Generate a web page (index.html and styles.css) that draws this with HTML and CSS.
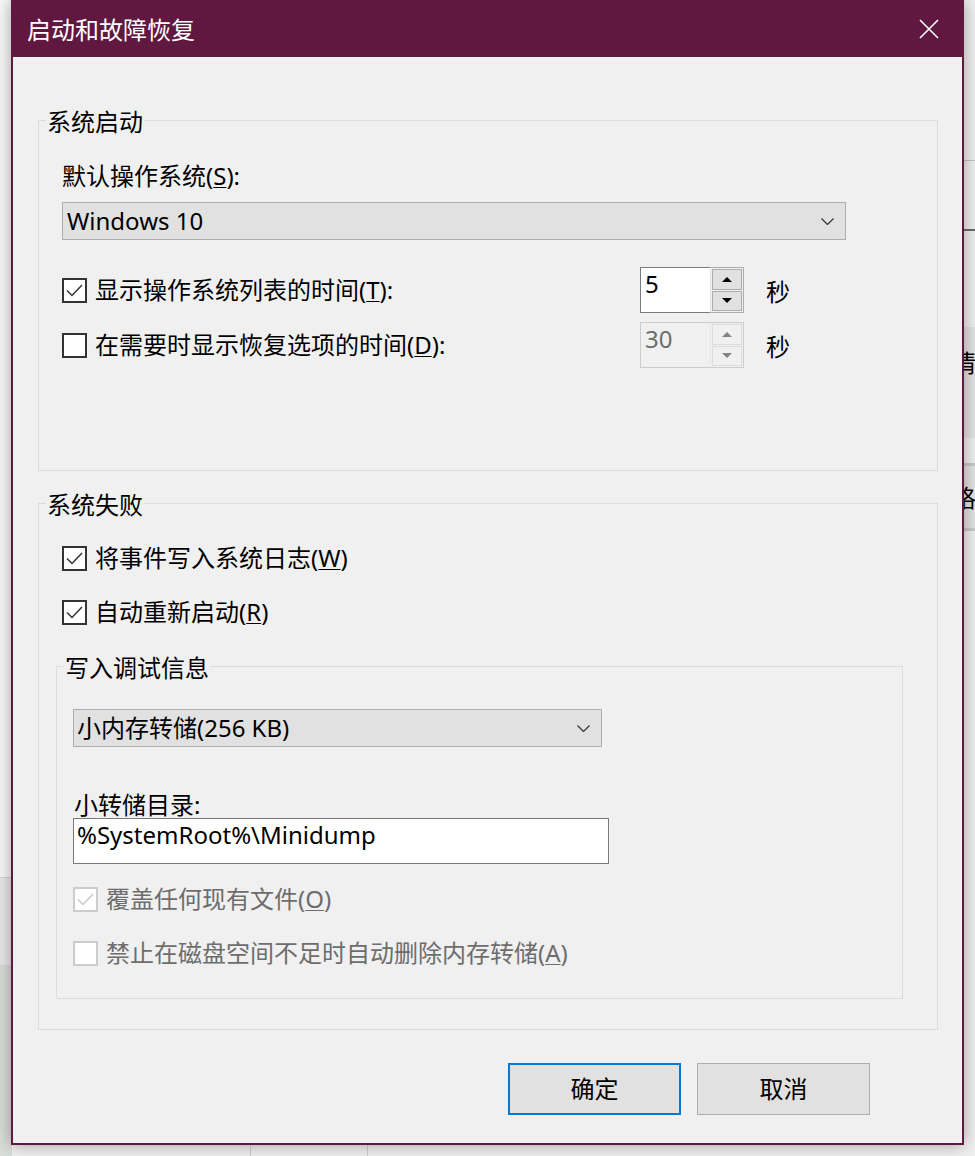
FILE: index.html
```html
<!DOCTYPE html>
<html lang="zh-CN">
<head>
<meta charset="utf-8">
<title>启动和故障恢复</title>
<link rel="stylesheet" href="styles.css">
</head>
<body>
<div class="desktop">
  <div class="bg bg-left-top"></div>
  <div class="bg bg-left-mid"></div>
  <div class="bg bg-left-bot"></div>
  <div class="bg bg-right-line1"></div>
  <div class="bg bg-right-line2"></div>
  <div class="bg bg-right-panel1"><span class="peek">情</span></div>
  <div class="bg bg-right-panel2"><span class="peek">格</span></div>
  <div class="bg bg-bottom-line1"></div>
  <div class="bg bg-bottom-line2"></div>

  <div class="dialog">
    <div class="titlebar">
      <span class="title">启动和故障恢复</span>
      <svg class="close" viewBox="0 0 20 20" width="20" height="20"><path d="M1 1L19 19M19 1L1 19" stroke="#fff" stroke-width="1.6" fill="none"/></svg>
    </div>

    <div class="content">
      <fieldset class="group g1">
        <legend>系统启动</legend>
        <div class="inner">
          <div class="label-row">默认操作系统(<u>S</u>):</div>
          <div class="combo combo-os">
            <span>Windows 10</span>
            <svg class="chev" viewBox="0 0 13 7" width="13" height="7"><path d="M0.5 0.5L6.5 6.5L12.5 0.5" stroke="#333" stroke-width="1.2" fill="none"/></svg>
          </div>
          <div class="timer-row first">
            <div class="check">
              <span class="box"><svg viewBox="0 0 21 21" width="21" height="21"><path d="M3 10.5L8 15.5L18 5" stroke="#333" stroke-width="1.5" fill="none"/></svg></span>
              <span>显示操作系统列表的时间(<u>T</u>):</span>
            </div>
            <div class="spin">
              <div class="spin-field">5</div>
              <div class="spin-btns">
                <div class="spin-btn"><svg viewBox="0 0 10 5" width="10" height="5"><path d="M0 5L5 0L10 5Z" fill="#000"/></svg></div>
                <div class="spin-btn"><svg viewBox="0 0 10 5" width="10" height="5"><path d="M0 0L5 5L10 0Z" fill="#000"/></svg></div>
              </div>
            </div>
            <span class="unit">秒</span>
          </div>
          <div class="timer-row second">
            <div class="check">
              <span class="box"></span>
              <span>在需要时显示恢复选项的时间(<u>D</u>):</span>
            </div>
            <div class="spin disabled">
              <div class="spin-field">30</div>
              <div class="spin-btns">
                <div class="spin-btn"><svg viewBox="0 0 10 5" width="10" height="5"><path d="M0 5L5 0L10 5Z" fill="#838383"/></svg></div>
                <div class="spin-btn"><svg viewBox="0 0 10 5" width="10" height="5"><path d="M0 0L5 5L10 0Z" fill="#838383"/></svg></div>
              </div>
            </div>
            <span class="unit">秒</span>
          </div>
        </div>
      </fieldset>

      <fieldset class="group g2">
        <legend>系统失败</legend>
        <div class="inner">
          <div class="check row r1">
            <span class="box"><svg viewBox="0 0 21 21" width="21" height="21"><path d="M3 10.5L8 15.5L18 5" stroke="#333" stroke-width="1.5" fill="none"/></svg></span>
            <span>将事件写入系统日志(<u>W</u>)</span>
          </div>
          <div class="check row r2">
            <span class="box"><svg viewBox="0 0 21 21" width="21" height="21"><path d="M3 10.5L8 15.5L18 5" stroke="#333" stroke-width="1.5" fill="none"/></svg></span>
            <span>自动重新启动(<u>R</u>)</span>
          </div>

          <fieldset class="group sub">
            <legend>写入调试信息</legend>
            <div class="sub-inner">
              <div class="combo combo-dump">
                <span>小内存转储(256 KB)</span>
                <svg class="chev" viewBox="0 0 13 7" width="13" height="7"><path d="M0.5 0.5L6.5 6.5L12.5 0.5" stroke="#333" stroke-width="1.2" fill="none"/></svg>
              </div>
              <div class="dir-label">小转储目录:</div>
              <div class="textbox">%SystemRoot%\Minidump</div>
              <div class="check row disabled d1">
                <span class="box"><svg viewBox="0 0 21 21" width="21" height="21"><path d="M3 10.5L8 15.5L18 5" stroke="#c8c8c8" stroke-width="1.5" fill="none"/></svg></span>
                <span>覆盖任何现有文件(<u>O</u>)</span>
              </div>
              <div class="check row disabled d2">
                <span class="box"></span>
                <span>禁止在磁盘空间不足时自动删除内存转储(<u>A</u>)</span>
              </div>
            </div>
          </fieldset>
        </div>
      </fieldset>

      <div class="buttons">
        <div class="btn default">确定</div>
        <div class="btn">取消</div>
      </div>
    </div>
  </div>
</div>
</body>
</html>
```

FILE: styles.css
```css
* { box-sizing: border-box; }
html, body { margin: 0; padding: 0; }
body {
  width: 975px;
  height: 1156px;
  overflow: hidden;
  background: #f0f0f0;
  font-family: "Noto Sans", "Noto Sans CJK SC", sans-serif;
  font-size: 24px;
  line-height: 24px;
  color: #000;
}
u { text-decoration-thickness: 1px; text-underline-offset: 2px; }

.desktop { position: relative; width: 975px; height: 1156px; }

/* background windows peeking around the dialog */
.bg { position: absolute; }
.bg-left-top { left: 0; top: 0; width: 12px; height: 877px; background: #f8f8f8; }
.bg-left-mid { left: 0; top: 877px; width: 12px; height: 88px; background: #e9e9e9; border-top: 1px solid #d4d4d4; }
.bg-left-bot { left: 0; top: 965px; width: 12px; height: 191px; background: #d9deda; }
.bg-right-line1 { left: 964px; top: 160px; width: 11px; height: 1px; background: #c4c4c4; }
.bg-right-line2 { left: 964px; top: 229px; width: 11px; height: 2px; background: #6b6b6b; }
.bg-right-panel1 { left: 958px; top: 327px; width: 17px; height: 111px; background: #e3e3e3; overflow: hidden; padding-top: 24px; }
.bg-right-panel2 { left: 958px; top: 463px; width: 17px; height: 68px; background: #e3e3e3; overflow: hidden; border-top: 3px solid #cacaca; border-bottom: 3px solid #cacaca; padding-top: 20px; }
.peek { display: block; margin-left: -6px; white-space: nowrap; }
.bg-bottom-line1 { left: 250px; top: 1140px; width: 1px; height: 16px; background: #cfcfcf; }
.bg-bottom-line2 { left: 367px; top: 1140px; width: 1px; height: 16px; background: #cfcfcf; }

/* dialog window */
.dialog {
  position: relative;
  z-index: 1;
  margin-left: 11px;
  width: 953px;
  height: 1145px;
  background: #f0f0f0;
  border: 2px solid #601841;
  border-top: 0;
  box-shadow: 0 0 16px rgba(0, 0, 0, 0.35);
  display: flex;
  flex-direction: column;
}
.titlebar {
  height: 57px;
  margin: 0 -2px;
  background: #601841;
  color: #fff;
  display: flex;
  align-items: center;
  padding: 3px 0 0 16px;
  flex: none;
}
.title { line-height: 24px; }
.close { margin-left: auto; margin-right: 25px; margin-top: -2px; }

.content {
  flex: 1;
  padding: 0 24px 0 25px;
  display: flex;
  flex-direction: column;
}

/* group boxes */
.group {
  margin: 0;
  padding: 0;
  border: 1px solid #dcdcdc;
  min-width: 0;
}
.group > legend {
  margin-left: 7px;
  padding: 5px 1px 2px;
  line-height: 24px;
}
.g1 { margin-top: 48px; width: 900px; }
.g1 .inner { padding: 28px 0 102px 23px; }
.g2 { margin-top: 17px; width: 900px; }
.g2 .inner { padding: 24px 0 30px 23px; }

.label-row { height: 24px; }

.combo {
  display: flex;
  align-items: center;
  height: 38px;
  background: #e1e1e1;
  border: 1px solid #adadad;
  padding: 0 11px 0 4px;
}
.combo .chev { margin-left: auto; }
.combo-os { margin-top: 14px; width: 784px; }
.combo-dump { margin-top: 27px; width: 529px; padding-left: 3px; }

/* checkboxes */
.check { display: flex; align-items: center; }
.box {
  width: 25px;
  height: 25px;
  border: 2px solid #333;
  background: #fff;
  margin-right: 8px;
  flex: none;
  display: flex;
}
.check.disabled { color: #6d6d6d; }
.check.disabled .box { border-color: #cccccc; }
.row { height: 30px; }
.r2 { margin-top: 24px; }

/* timer rows */
.timer-row { display: flex; align-items: center; height: 46px; }
.timer-row.first { margin-top: 27px; }
.timer-row.second { margin-top: 9px; }
.timer-row .check { width: 578px; }
.unit { margin-left: 22px; padding-top: 3px; }

.spin { display: flex; width: 104px; height: 46px; }
.spin-field {
  width: 70px;
  background: #fff;
  border: 1px solid #7a7a7a;
  border-right: 0;
  padding: 4px 0 0 4px;
}
.spin-btns {
  width: 34px;
  border: 1px solid #adadad;
  border-left: 1px solid #e6e6e6;
  background: #f0f0f0;
  padding: 1px;
  display: flex;
  flex-direction: column;
  gap: 1px;
}
.spin-btn {
  flex: 1;
  background: #e1e1e1;
  border: 1px solid #adadad;
  display: flex;
  align-items: center;
  justify-content: center;
}
.spin.disabled .spin-field { background: #f0f0f0; border-color: #cccccc; color: #6d6d6d; }
.spin.disabled .spin-btns { border-color: #cccccc; border-left-color: #e6e6e6; }
.spin.disabled .spin-btn { background: #f0f0f0; border-color: #dcdcdc; }

/* sub group */
.sub { margin: 24px 0 0 -6px; width: 847px; }
.sub-inner { padding: 0 0 30px 16px; }
.dir-label { margin-top: 46px; height: 24px; padding-left: 1px; }
.textbox {
  margin-top: 1px;
  width: 536px;
  height: 46px;
  background: #fff;
  border: 1px solid #7a7a7a;
  padding: 4px 0 0 3px;
}
.d1 { margin-top: 20px; }
.d2 { margin-top: 24px; }

/* buttons */
.buttons {
  margin-top: 33px;
  display: flex;
  justify-content: flex-end;
  gap: 16px;
  padding-right: 68px;
}
.btn {
  width: 173px;
  height: 52px;
  background: #e1e1e1;
  border: 1px solid #adadad;
  display: flex;
  align-items: center;
  justify-content: center;
}
.btn.default { border: 2px solid #0078d7; }
```
